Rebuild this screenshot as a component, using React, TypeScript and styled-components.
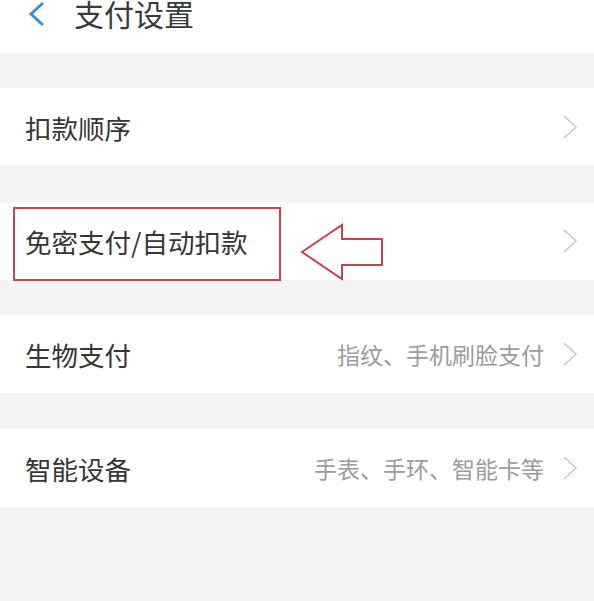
import React from "react";
import styled, { createGlobalStyle } from "styled-components";

const GlobalStyle = createGlobalStyle`
  html, body {
    margin: 0;
    padding: 0;
    background: #f4f4f4;
  }
  body {
    font-family: "Noto Sans CJK SC", "Noto Sans", sans-serif;
  }
`;

const Page = styled.div`
  width: 594px;
  height: 601px;
  overflow: hidden;
  background: #f4f4f4;
  display: flex;
  flex-direction: column;
`;

const Header = styled.div`
  height: 53px;
  background: #fff;
  display: flex;
  align-items: flex-start;
  padding-left: 26px;
  gap: 28px;
`;

const Title = styled.div`
  font-size: 30px;
  line-height: 31px;
  color: #3a3a3a;
  margin-top: -2px;
`;

const Band = styled.div<{ $h: number }>`
  height: ${(p) => p.$h}px;
  background: #f4f4f4;
`;

const Row = styled.div`
  position: relative;
  height: 78px;
  background: #fff;
  display: flex;
  align-items: center;
  padding: 0 16px 0 25px;
`;

const Label = styled.div`
  font-size: 26.5px;
  color: #363636;
  flex: 1;
`;

const Hint = styled.div`
  font-size: 23px;
  color: #9c9c9c;
  margin-right: 18px;
`;

const Highlight = styled.div`
  position: absolute;
  left: 13px;
  top: 5px;
  width: 264px;
  height: 70px;
  border: 2px solid #c8434f;
`;

const ArrowMark = styled.svg`
  position: absolute;
  left: 300px;
  top: 21px;
`;

const Chevron = () => (
  <svg width="16" height="26" viewBox="0 0 16 26">
    <path d="M2 2 L14 13 L2 24" fill="none" stroke="#c8c8c8" strokeWidth="1.6" />
  </svg>
);

const BackIcon = () => (
  <svg width="20" height="28" viewBox="0 0 20 28">
    <path d="M17 3 L5 14 L17 25" fill="none" stroke="#3b8fd6" strokeWidth="3" />
  </svg>
);

type Item = { label: string; hint?: string; marked?: boolean };

const items: Item[] = [
  { label: "扣款顺序" },
  { label: "免密支付/自动扣款", marked: true },
  { label: "生物支付", hint: "指纹、手机刷脸支付" },
  { label: "智能设备", hint: "手表、手环、智能卡等" },
];

const bands = [35, 36, 35, 36];

export default function App() {
  return (
    <>
      <GlobalStyle />
      <Page>
        <Header>
          <BackIcon />
          <Title>支付设置</Title>
        </Header>
        {items.map((it, i) => (
          <React.Fragment key={it.label}>
            <Band $h={bands[i]} />
            <Row>
              <Label>{it.label}</Label>
              {it.hint && <Hint>{it.hint}</Hint>}
              <Chevron />
              {it.marked && (
                <>
                  <Highlight />
                  <ArrowMark width="86" height="60" viewBox="0 0 86 60">
                    <path
                      d="M2 29 L42 2 L42 16 L82 16 L82 42 L42 42 L42 56 Z"
                      fill="none"
                      stroke="#c8434f"
                      strokeWidth="2"
                      strokeLinejoin="miter"
                    />
                  </ArrowMark>
                </>
              )}
            </Row>
          </React.Fragment>
        ))}
      </Page>
    </>
  );
}
